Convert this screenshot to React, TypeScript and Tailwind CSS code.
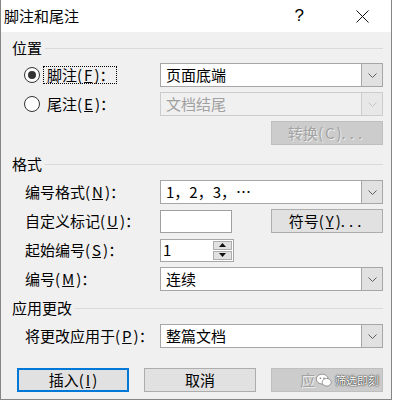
import type { ReactNode } from "react";

const cjk = "font-['Noto_Sans_CJK_SC','Noto_Sans',sans-serif]";

function Chevron({ disabled }: { disabled?: boolean }) {
  return (
    <svg width="9" height="5" viewBox="0 0 9 5" fill="none">
      <path d="M0.5 0.5 L4.5 4.5 L8.5 0.5" stroke={disabled ? "#c6c6c6" : "#5f5f5f"} />
    </svg>
  );
}

function Select({ value, disabled }: { value: string; disabled?: boolean }) {
  return (
    <div
      className={`flex h-6 w-[223px] border ${
        disabled ? "border-[#cccccc] bg-[#f0f0f0] text-[#a0a0a0]" : "border-[#a6a6a6] bg-white text-black"
      }`}
    >
      <div className="flex flex-1 items-center pl-[5px]">{value}</div>
      <div
        className={`flex w-[21px] items-center justify-center border-l ${
          disabled ? "border-[#cccccc] bg-[#e8e8e8]" : "border-[#a6a6a6] bg-[#e1e1e1]"
        }`}
      >
        <Chevron disabled={disabled} />
      </div>
    </div>
  );
}

function Heading({ children, className }: { children: ReactNode; className: string }) {
  return (
    <div className={`flex h-4 items-center ${className}`}>
      <span>{children}</span>
      <div className="ml-[3px] h-px flex-1 bg-[#dadada]" />
    </div>
  );
}

function Row({ label, children, className }: { label: ReactNode; children: ReactNode; className: string }) {
  return (
    <div className={`flex h-6 items-center pl-[13px] ${className}`}>
      <div className="w-[135px]">{label}</div>
      {children}
    </div>
  );
}

// mnemonic key, e.g. (F)
function Key({ k, plain }: { k: string; plain?: boolean }) {
  return (
    <>
      (<span className="px-[2px]">{plain ? k : <u>{k}</u>}</span>)
    </>
  );
}

function Dots() {
  return <span className="tracking-[4px]">...</span>;
}

function Button({ children, variant }: { children: ReactNode; variant?: "default" | "disabled" }) {
  const look =
    variant === "default"
      ? "border-2 border-[#0078d7] bg-[#e1e1e1]"
      : variant === "disabled"
        ? "border border-[#bfbfbf] bg-[#cccccc] text-[#a3a3a3] [text-shadow:1px_1px_0_#ececec]"
        : "border border-[#adadad] bg-[#e1e1e1]";
  return <div className={`flex h-6 w-[112px] items-center justify-center ${look}`}>{children}</div>;
}

function Radio({ checked }: { checked?: boolean }) {
  return (
    <div className="flex size-4 items-center justify-center rounded-full border border-[#333333] bg-white">
      {checked && <div className="size-2 rounded-full bg-[#333333]" />}
    </div>
  );
}

export default function App() {
  return (
    <div className={`min-h-[403px] w-[394px] bg-white text-[15px] text-black ${cjk}`}>
      <div className="flex h-[400px] w-[392px] flex-col border-x border-b border-[#858585] bg-[#f0f0f0]">
        <div className="flex h-8 items-center bg-white pl-[3px]">
          <span className="flex-1">脚注和尾注</span>
          <span className="mr-[52px] font-['Liberation_Sans',sans-serif] text-[17px] font-light">?</span>
          <svg width="13" height="13" viewBox="0 0 13 13" className="mr-[22px]">
            <path d="M0.5 0.5 L12.5 12.5 M12.5 0.5 L0.5 12.5" stroke="#111" strokeWidth="1" />
          </svg>
        </div>

        <div className="flex flex-col pl-[11px] pr-[8px]">
          <Heading className="mt-[8px]">位置</Heading>

          <div className="mt-[7px] flex h-6 items-center pl-[12px]">
            <div className="flex w-[136px] items-center">
              <Radio checked />
              <div className="ml-[3px] flex h-[18px] items-center border border-dotted border-black pl-[3px] pr-[2px]">
                脚注<Key k="F" />：
              </div>
            </div>
            <Select value="页面底端" />
          </div>

          <div className="mt-[5px] flex h-6 items-center pl-[12px]">
            <div className="flex w-[136px] items-center">
              <Radio />
              <div className="ml-[7px]">
                尾注<Key k="E" />：
              </div>
            </div>
            <Select value="文档结尾" disabled />
          </div>

          <div className="mt-[5px] flex justify-end">
            <Button variant="disabled">
              转换<Key k="C" plain />
              <Dots />
            </Button>
          </div>

          <Heading className="mt-[11px]">格式</Heading>

          <Row className="mt-[8px]" label={<>编号格式<Key k="N" />：</>}>
            <Select value="1，2，3，…" />
          </Row>

          <Row className="mt-[5px]" label={<>自定义标记<Key k="U" />：</>}>
            <div className="h-[23px] w-[72px] border border-[#a0a0a0] bg-white" />
            <div className="ml-auto">
              <Button>
                符号<Key k="Y" />
                <Dots />
              </Button>
            </div>
          </Row>

          <Row className="mt-[5px]" label={<>起始编号<Key k="S" />：</>}>
            <div className="flex h-[23px] w-[74px] items-center border border-[#a6a6a6] bg-white pl-[2px]">
              <span className="flex-1">1</span>
              <div className="mr-px flex h-[19px] w-[19px] flex-col gap-px">
                <div className="flex flex-1 items-center justify-center border border-[#adadad] bg-[#e1e1e1]">
                  <svg width="7" height="4" viewBox="0 0 7 4">
                    <path d="M0 4 L3.5 0 L7 4 Z" fill="#111" />
                  </svg>
                </div>
                <div className="flex flex-1 items-center justify-center border border-[#adadad] bg-[#e1e1e1]">
                  <svg width="7" height="4" viewBox="0 0 7 4">
                    <path d="M0 0 L3.5 4 L7 0 Z" fill="#111" />
                  </svg>
                </div>
              </div>
            </div>
          </Row>

          <Row className="mt-[5px]" label={<>编号<Key k="M" />：</>}>
            <Select value="连续" />
          </Row>

          <Heading className="mt-[9px]">应用更改</Heading>

          <Row className="mt-[8px]" label={<>将更改应用于<Key k="P" />：</>}>
            <Select value="整篇文档" />
          </Row>

          <div className="mt-[20px] flex justify-end gap-[15px]">
            <Button variant="default">
              插入<Key k="I" />
            </Button>
            <Button>取消</Button>
            <div className="flex h-6 w-[112px] items-center overflow-hidden whitespace-nowrap border border-[#bfbfbf] bg-[#cccccc] pl-[28px]">
              <span className="shrink-0 text-[#a3a3a3] [text-shadow:1px_1px_0_#ececec]">应</span>
              <svg width="18" height="16" viewBox="0 0 20 16" className="shrink-0">
                <ellipse cx="8" cy="7" rx="6.5" ry="5.5" fill="#fff" stroke="#777" strokeWidth="0.8" />
                <ellipse cx="13" cy="10.5" rx="5" ry="4.2" fill="#fff" stroke="#777" strokeWidth="0.8" />
                <circle cx="6" cy="6" r="0.9" fill="#777" />
                <circle cx="10" cy="6" r="0.9" fill="#777" />
              </svg>
              <span className="ml-[2px] shrink-0 text-[11px] text-white [text-shadow:0_0_2px_#333,0_0_1px_#000]">
                筛选即刻
              </span>
            </div>
          </div>
        </div>
      </div>
    </div>
  );
}
